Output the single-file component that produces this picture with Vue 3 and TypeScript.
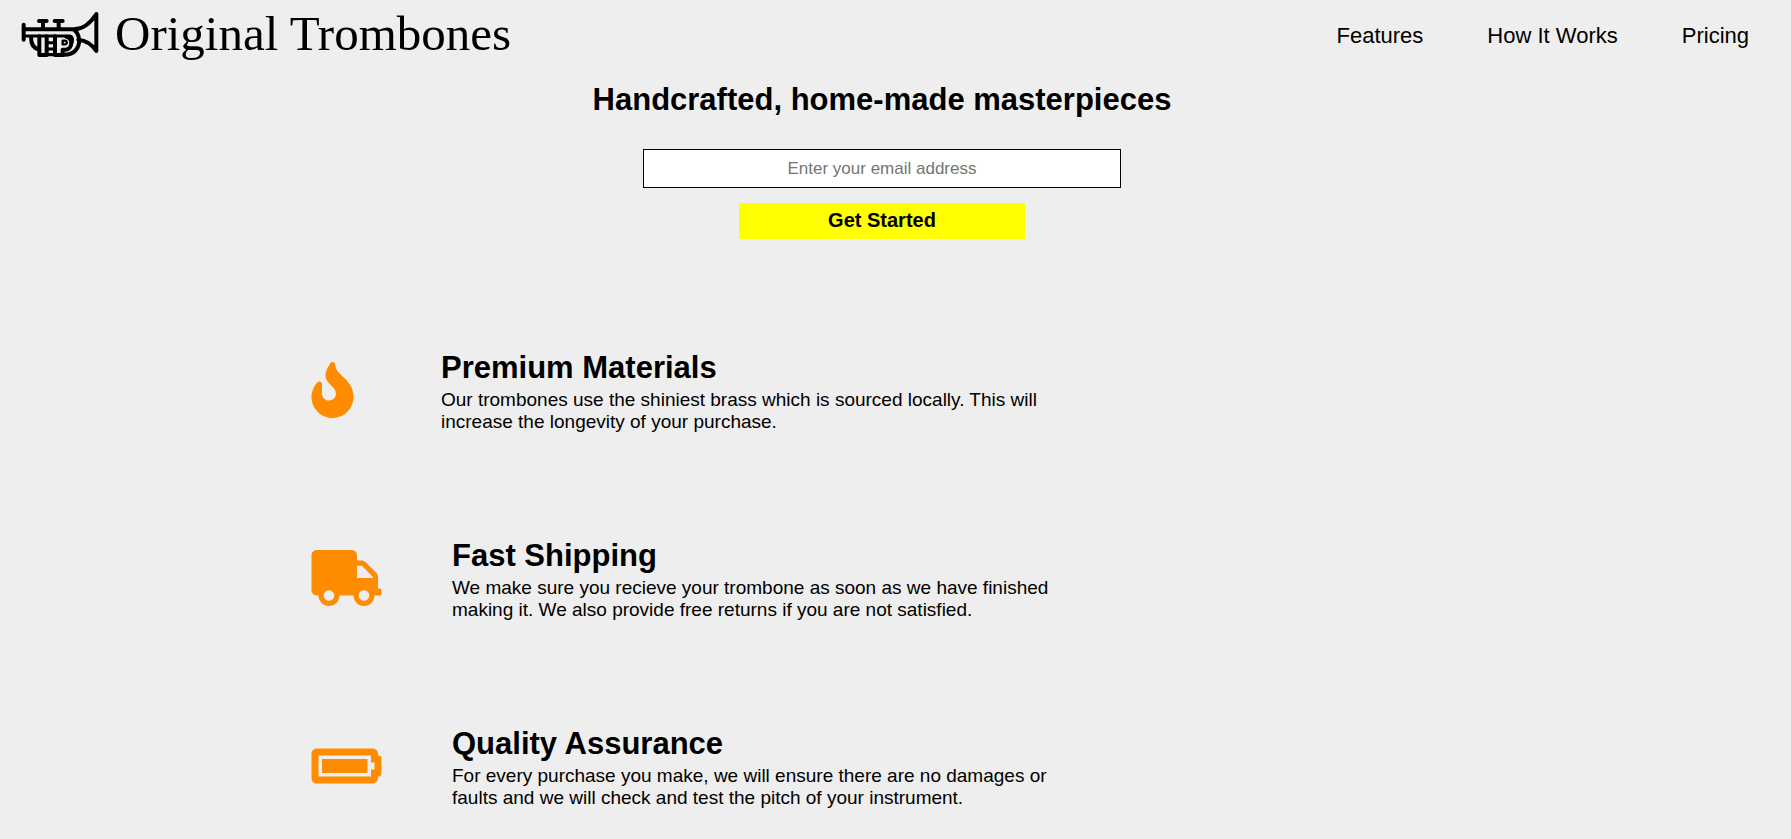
<script setup lang="ts">
import { ref } from 'vue'

interface Feature {
  title: string
  text: string
  viewBox: string
  icon: string
  narrow: boolean
}

const email = ref('')

const links = [
  { label: 'Features', href: '#features' },
  { label: 'How It Works', href: '#how-it-works' },
  { label: 'Pricing', href: '#pricing' },
]

const features: Feature[] = [
  {
    title: 'Premium Materials',
    text: 'Our trombones use the shiniest brass which is sourced locally. This will increase the longevity of your purchase.',
    viewBox: '0 0 384 512',
    narrow: true,
    icon: 'M216 23.858c0-23.802-30.653-32.765-44.149-13.038C48 191.851 224 200 224 288c0 35.629-29.114 64.458-64.85 63.994C123.98 351.538 96 322.22 96 287.046v-85.51c0-21.703-26.471-32.225-41.432-16.504C27.801 213.158 0 261.332 0 320c0 105.869 86.131 192 192 192s192-86.131 192-192c0-170.29-168-193.003-168-296.142z',
  },
  {
    title: 'Fast Shipping',
    text: 'We make sure you recieve your trombone as soon as we have finished making it. We also provide free returns if you are not satisfied.',
    viewBox: '0 0 640 512',
    narrow: false,
    icon: 'M624 352h-16V243.9c0-12.7-5.1-24.9-14.1-33.9L494 110.1c-9-9-21.2-14.1-33.9-14.1H416V48c0-26.5-21.5-48-48-48H48C21.5 0 0 21.5 0 48v320c0 26.5 21.5 48 48 48h16c0 53 43 96 96 96s96-43 96-96h128c0 53 43 96 96 96s96-43 96-96h48c8.8 0 16-7.2 16-16v-32c0-8.8-7.2-16-16-16zM160 464c-26.5 0-48-21.5-48-48s21.5-48 48-48 48 21.5 48 48-21.5 48-48 48zm320 0c-26.5 0-48-21.5-48-48s21.5-48 48-48 48 21.5 48 48-21.5 48-48 48zm80-208H416V144h44.1l99.9 99.9V256z',
  },
  {
    title: 'Quality Assurance',
    text: 'For every purchase you make, we will ensure there are no damages or faults and we will check and test the pitch of your instrument.',
    viewBox: '0 0 640 512',
    narrow: false,
    icon: 'M544 160v64h32v64h-32v64H64V160h480m16-64H48c-26.51 0-48 21.49-48 48v224c0 26.51 21.49 48 48 48h512c26.51 0 48-21.49 48-48v-16h8c13.255 0 24-10.745 24-24V184c0-13.255-10.745-24-24-24h-8v-16c0-26.51-21.49-48-48-48zm-48 96H96v128h416V192z',
  },
]
</script>

<template>
  <div class="page">
    <header class="header">
      <a class="brand" href="#">
        <svg class="trumpet" viewBox="0 0 285 180" aria-hidden="true">
          <g fill="none" stroke="#000" stroke-width="12" stroke-linecap="round" stroke-linejoin="round">
            <path d="M26 59V104" />
            <path d="M26 73H178C208 72 228 52 244 27V138C231 118 214 106 190 104" />
            <path d="M26 93H162C174 93 176 108 168 120" stroke-width="9" />
            <path d="M178 75C196 90 197 118 182 136C174 145 162 149 147 149" />
            <path d="M72 48H95M84 49V72M119 48H143M131 49V72" stroke-width="12" />
            <path d="M48 96C48 116 56 130 71 133" stroke-width="12" />
            <path d="M73 94V150H95V94M120 94V150H143V134H152C174 132 174 98 154 95" />
            <path d="M96 113H120M96 132H120" stroke-width="9" />
            <path d="M96 149H120" stroke-width="10" />
            <path d="M143 118H151C157 116 157 108 151 107H143Z" stroke-width="7" />
          </g>
        </svg>
        <span class="brand-name">Original Trombones</span>
      </a>
      <nav class="nav">
        <a v-for="link in links" :key="link.href" :href="link.href">{{ link.label }}</a>
      </nav>
    </header>

    <main class="main">
      <section class="hero">
        <h1>Handcrafted, home-made masterpieces</h1>
        <form class="form" @submit.prevent>
          <input v-model="email" type="email" aria-label="Email address" placeholder="Enter your email address" />
          <button type="submit">Get Started</button>
        </form>
      </section>

      <section id="features" class="features">
        <article
          v-for="feature in features"
          :key="feature.title"
          class="feature"
          :class="{ 'feature-narrow': feature.narrow }"
        >
          <svg class="icon" :viewBox="feature.viewBox" aria-hidden="true">
            <path :d="feature.icon" />
          </svg>
          <div class="copy">
            <h2>{{ feature.title }}</h2>
            <p>{{ feature.text }}</p>
          </div>
        </article>
      </section>
    </main>
  </div>
</template>

<style>
body {
  background: #eee;
}
</style>

<style scoped>
.page {
  font-family: 'Liberation Sans', Arial, sans-serif;
  color: #000;
}

.page * {
  box-sizing: border-box;
}

h1,
h2,
p {
  margin: 0;
}

.header {
  display: flex;
  justify-content: space-between;
  align-items: center;
  padding: 0 42px 0 15px;
}

.brand {
  display: flex;
  align-items: flex-start;
  gap: 5px;
  padding: 5px 0 7px;
  color: inherit;
  text-decoration: none;
}

.trumpet {
  width: 95px;
  height: 60px;
}

.brand-name {
  font-family: 'Liberation Serif', 'Times New Roman', serif;
  font-size: 49px;
  line-height: 58px;
}

.nav {
  display: flex;
  gap: 64px;
}

.nav a {
  color: inherit;
  font-size: 22px;
  line-height: 28px;
  text-decoration: none;
}

.main {
  padding-right: 27px;
}

.hero {
  display: flex;
  flex-direction: column;
  align-items: center;
  gap: 31px;
}

h1 {
  margin-top: 10px;
  font-size: 31px;
  line-height: 36px;
}

.form {
  display: flex;
  flex-direction: column;
  align-items: center;
  gap: 15px;
  width: 100%;
}

.form input {
  width: 478px;
  max-width: 100%;
  height: 39px;
  padding: 0 8px;
  border: 1px solid #000;
  border-radius: 0;
  background: #fff;
  font: 17px 'Liberation Sans', Arial, sans-serif;
  text-align: center;
}

.form input::placeholder {
  color: #757575;
}

.form button {
  width: 286px;
  height: 36px;
  padding: 0 0 2px;
  border: 0;
  background: #ff0;
  color: #000;
  font: bold 20px 'Liberation Sans', Arial, sans-serif;
  cursor: pointer;
}

.features {
  display: flex;
  flex-direction: column;
  gap: 105px;
  margin-top: 111px;
  padding: 0 20px 28px 311px;
}

.feature {
  display: grid;
  grid-template-columns: 71px minmax(0, 604px);
  column-gap: 70px;
  align-items: center;
}

.feature-narrow {
  grid-template-columns: 43px minmax(0, 604px);
  column-gap: 87px;
}

.icon {
  width: 100%;
  height: 56px;
  margin-bottom: 3px;
  fill: #ff8c00;
}

h2 {
  font-size: 31px;
  line-height: 36px;
}

.copy p {
  margin-top: 3px;
  font-size: 19px;
  line-height: 22px;
}
</style>
